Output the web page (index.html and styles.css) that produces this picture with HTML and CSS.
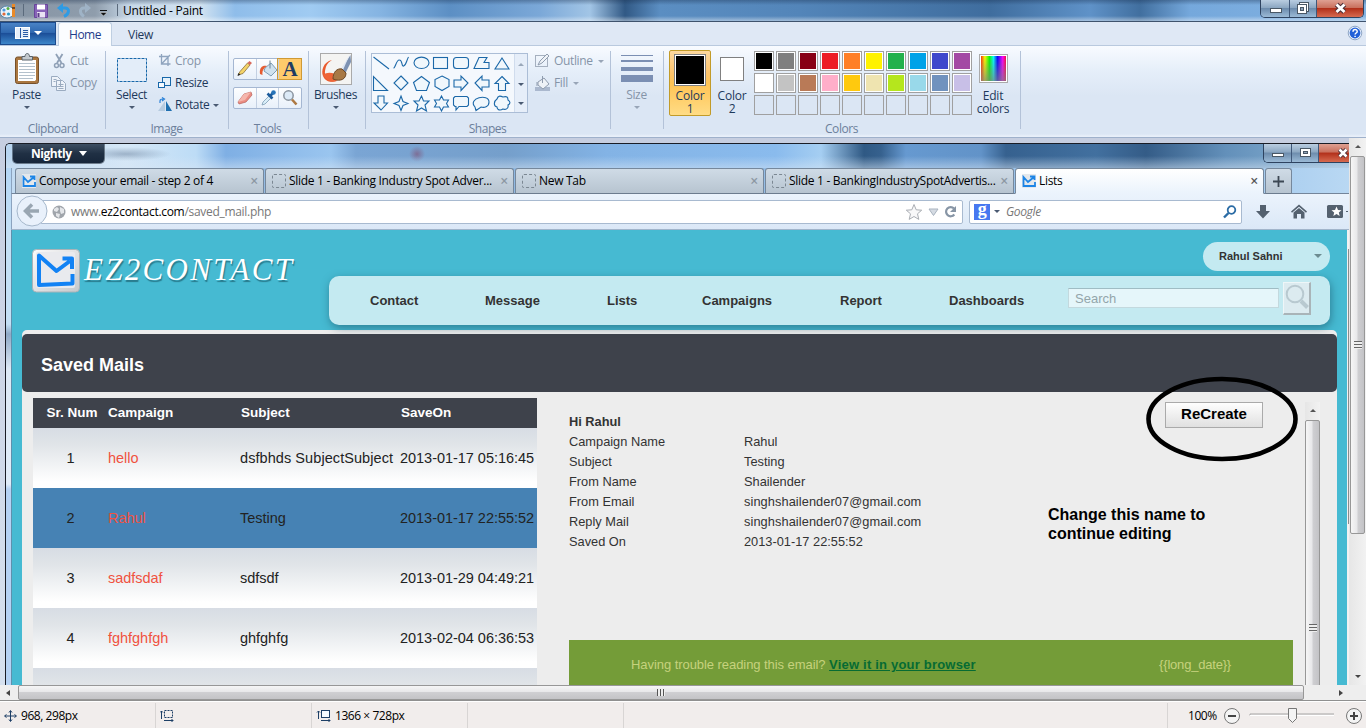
FILE: index.html
```html
<!DOCTYPE html>
<html lang="en">
<head>
<meta charset="utf-8">
<title>Untitled - Paint</title>
<link rel="stylesheet" href="styles.css">
</head>
<body>
<div class="app">
  <header class="titlebar">
    <svg class="quick" width="120" height="21" viewBox="0 0 120 21">
      <ellipse cx="7" cy="12" rx="7" ry="6" fill="#e8f2fa" stroke="#5486ab"/>
      <circle cx="4" cy="10" r="1.6" fill="#4b9be0"/><circle cx="8" cy="8.500" r="1.500" fill="#57b043"/><circle cx="4" cy="14" r="1.600" fill="#e06a3a"/><circle cx="8.500" cy="14" r="1.600" fill="#2f9cc4"/>
      <path d="M13.500 4v13" stroke="#e98a2a" stroke-width="3"/><path d="M12 8h3" stroke="#7b4a1d" stroke-width="2"/>
      <path d="M23.500 4v12M117.500 4v12" stroke="#5b6a7c"/>
      <path d="M34.500 4.500h13v13h-13z" fill="#8863b8" stroke="#68459b"/><path d="M37 4.500h8v5h-8z" fill="#fff"/><path d="M37 12h8v5.500h-8z" fill="#e9e2f4"/><path d="M38.500 13v4" stroke="#5a3d88" stroke-width="2"/>
      <path d="M61 8h4c5 0 4.500 6-1 8.500" fill="none" stroke="#2e9be4" stroke-width="3"/><path d="M57 8l6-5v10z" fill="#2e9be4"/>
      <path d="M87 8h-3c-5 0-4.500 6 0 8.500" fill="none" stroke="#9fb3c6" stroke-width="3"/><path d="M91 8l-6-5v10z" fill="#9fb3c6"/>
      <path d="M100 10.500h7" stroke="#111"/><path d="M100 12.500h7l-3.500 3.500z" fill="#111" stroke="#fff" stroke-width=".4"/>
    </svg>
    <span class="caption">Untitled - Paint</span>
    <div class="winbtns">
      <span class="wb wb-min"><svg width="28" height="17"><rect x="9.500" y="8.500" width="11" height="4" fill="#fff" stroke="#4a5866"/></svg></span>
      <span class="wb wb-max"><svg width="26" height="17"><rect x="9.500" y="2.500" width="9" height="9" fill="#fff" stroke="#4a5866"/><rect x="7.500" y="4.500" width="9" height="9" fill="#fff" stroke="#4a5866"/><rect x="10.500" y="7.500" width="3" height="3" fill="#8fa3b8" stroke="#4a5866"/></svg></span>
      <span class="wb wb-close"><svg width="46" height="17"><path d="M19.500 4.500l8 7.500M27.500 4.500l-8 7.500" stroke="#4d3038" stroke-width="5"/><path d="M19.500 4.500l8 7.500M27.500 4.500l-8 7.500" stroke="#fff" stroke-width="2.800"/></svg></span>
    </div>
  </header>

  <nav class="tabs">
    <span class="filetab"><svg width="56" height="23"><rect x="15.500" y="5.500" width="14" height="11" fill="#e6effa" stroke="#fff"/><path d="M20.500 6v10" stroke="#2b5ba6"/><path d="M23 8.500h5M23 10.500h5M23 12.500h5M23 14.500h5" stroke="#2b5ba6"/><path d="M34 9h8l-4 4z" fill="#fff"/></svg></span>
    <span class="tab tab-on">Home</span>
    <span class="tab">View</span>
    <svg class="help" width="16" height="16"><circle cx="8" cy="8" r="6.800" fill="#eaf2fd" stroke="#8fa6c4"/><circle cx="8" cy="8" r="5.400" fill="#2160d8"/><path d="M6 6.700c0-3 4.300-2.700 4.200-.3C10.200 8 8.100 8 8.100 9.500M8.100 10.800v1.300" fill="none" stroke="#fff" stroke-width="1.500"/></svg>
  </nav>

  <section class="ribbon">
    <div class="group g-clip">
      <div class="tools">
        <div class="big">
          <svg width="26" height="32"><rect x="1.500" y="4" width="23" height="26.500" rx="2" fill="#aa7740" stroke="#76502a"/><path d="M4 7h18v19.500l-1 1.500H4z" fill="#fff"/><path d="M5 10.500h16M5 13.500h16M5 16.500h16M5 19.500h16M5 22.500h16M5 25.500h14" stroke="#b4c1cc"/><path d="M8 3.500h3c0-4 4.500-4 4.500 0h3v3.500H8z" fill="#c3c9ce" stroke="#59636b"/></svg>
          <span>Paste</span><i class="dn"></i>
        </div>
        <div class="small off">
          <span><svg width="17" height="16"><path d="M3 1l5.500 9M9.500 1L4 10" fill="none" stroke="#8fa0b6" stroke-width="1.800"/><circle cx="3.500" cy="12.500" r="2" fill="none" stroke="#8fa0b6" stroke-width="1.500"/><circle cx="9" cy="12.500" r="2" fill="none" stroke="#8fa0b6" stroke-width="1.500"/></svg>Cut</span>
          <span class="pull"><svg width="19" height="17"><path d="M.5 1.500h6l3 3v7h-9zM5.500 5.500h6l3 3v7h-9z" fill="#eef3fa" stroke="#9aabc0"/><path d="M2.500 4.500h3M2.500 6.500h2M7.500 9.500h5M7.500 11.500h5M7.500 13.500h5" stroke="#9aabc0"/></svg>Copy</span>
        </div>
      </div>
      <div class="glabel">Clipboard</div>
    </div>
    <div class="group g-image">
      <div class="tools">
        <div class="big">
          <svg width="32" height="32"><rect x="1.500" y="5.500" width="29" height="23" fill="#e3edf9" stroke="#1767a9" stroke-dasharray="3 1"/></svg>
          <span>Select</span><i class="dn"></i>
        </div>
        <div class="small">
          <span class="off"><svg width="17" height="16"><path d="M3.500 1v10h9M1 3.500h9v9.500M3.500 11l8.500-9" fill="none" stroke="#8fa4be" stroke-width="1.300"/></svg>Crop</span>
          <span><svg width="17" height="16"><rect x="4.500" y="2.500" width="8" height="8" fill="#e4f1fa" stroke="#1767a9"/><rect x=".5" y="7.500" width="6" height="5" fill="#f6fbff" stroke="#1767a9"/></svg>Resize</span>
          <span><svg width="17" height="16"><path d="M8 4v10h6z" fill="#1e6fb0"/><path d="M7 4v10H0z" fill="#b6cbe0"/><path d="M2 6V4q0-2 3-2M4 .5L6.500 2 4 4" fill="none" stroke="#2b82d8" stroke-width="1.200"/></svg>Rotate<i class="dn"></i></span>
        </div>
      </div>
      <div class="glabel">Image</div>
    </div>
    <div class="group g-tools">
      <div class="tools toolgrid">
        <div class="trio">
          <svg width="22" height="22"><path d="M4 16l2-3.500L13.500 4l2.500 2-7 8.500z" fill="#f3d368" stroke="#8a7038" stroke-width=".8"/><path d="M13.500 4l2-2 2.500 2-2 2z" fill="#d86a5c"/><path d="M3.500 17l1-3 2 1.700z" fill="#222"/></svg>
          <svg width="22" height="22"><path d="M8 9l6-5 6 7-6 6-7-5z" fill="#cfe1ef" stroke="#7f9db5"/><path d="M13 1.500v8" stroke="#6c8496"/><path d="M3 15c-1-7 3-9 7-8-3 2-5 4-4.500 9z" fill="#e65c31"/></svg>
          <b class="letter">A</b>
        </div>
        <div class="trio">
          <svg width="22" height="22"><path d="M4 14l6-8 7-2 1 3-6 7-7 2z" fill="#eb8d83" stroke="#b76059" stroke-width=".7"/><path d="M4 14l6-8 7-2-6 8z" fill="#f5b6ac"/></svg>
          <svg width="22" height="22"><path d="M5 17l1-3 6-6 2 2-6 6z" fill="#d8edf8" stroke="#7f9db5" stroke-width=".8"/><path d="M10.500 5.500l5 5M13 8l3-3" stroke="#1c5b9c" stroke-width="2.600"/><circle cx="16.500" cy="4.500" r="2.300" fill="#2774ba"/></svg>
          <svg width="22" height="22"><circle cx="9.500" cy="7.500" r="4.700" fill="#dceaf7" stroke="#8a949f" stroke-width="1.500"/><path d="M13 11.500l4.500 5" stroke="#ad7943" stroke-width="2.600"/></svg>
        </div>
      </div>
      <div class="glabel">Tools</div>
    </div>
    <div class="group g-brush">
      <div class="tools">
        <div class="big">
          <svg width="32" height="32"><rect x=".5" y=".5" width="31" height="31" fill="#f4f4f2" stroke="#aaa"/><path d="M12 7C3 9 1 18 3 23s7 7 14 5c-8-1-13-5-12-10s2-8 7-11z" fill="#ea5b2d"/><path d="M3 22q5-4 12-1l3 6q-8 5-15-5z" fill="#ee6537"/><path d="M30.500 2l-9 14 4 4 5.500-11z" fill="#7d92b2"/><path d="M30 1l-9 15 2 1z" fill="#dfe8f4"/><path d="M13 26c0-7 4-11 9-10l4 4c0 6-5 9-13 6z" fill="#a87945" stroke="#6e4a28"/></svg>
          <span>Brushes</span><i class="dn"></i>
        </div>
      </div>
    </div>
    <div class="group g-shapes">
      <div class="tools">
        <div class="gallery">
          <svg width="142" height="58" fill="#f0f7fc" stroke="#1b68a8" stroke-width="1.100">
            <path d="M2.500 3L18 15"/><path d="M22.500 14c2 0 3-9 6-8 3 0 2 7 4 6 3-1 3-6 5-9" fill="none"/><ellipse cx="50.500" cy="8.800" rx="7.500" ry="5.700"/><rect x="62.500" y="3.500" width="14" height="11"/><rect x="82.500" y="3.500" width="15" height="11" rx="3"/><path d="M103 14.500l5-11h8l-3 5h5v6z"/><path d="M131 4l7 11h-14z"/>
            <path d="M2.500 22.500v14h14z"/><path d="M30 22l7 7-7 7-7-7z"/><path d="M50.500 22.500l8 6-3 8h-10l-3-8z"/><path d="M71 22l7 3.500v7L71 36.500l-7-4v-7z"/><path d="M83 26h7v-4l7 7-7 7.500V33h-7z"/><path d="M118 26h-7v-4l-7 7 7 7.500V33h7z"/><path d="M131 22.500l7 7h-3.500v7h-7v-7H124z"/>
            <path d="M7 42h6v7h3.500L10 56l-7-7h4z"/><path d="M30 42l2 5.500 5 2-5 2-2 5-2-5-5-2 5-2z"/><path d="M50.500 42l2 5h5.500l-4 4 1.500 6-5-3-5 3 1.500-6-4-4h5z"/><path d="M70.500 42l2 4h5l-2 3.500 2 3.500h-5l-2 4-2-4h-5l2-3.500-2-3.500h5z"/><path d="M84 42.500h12l1.500 1.500v7L96 52.500H88l-3 3.500v-3.500h-1l-1.500-1.500v-7z"/><path d="M104 53c-8-9 14-14 14-5 0 5-5 6-8 5l-5 3.500z"/><path d="M126 45c1-4 4-3 6-2 4-1 5 0 5 3 3 2 2 4 0 5 1 4-3 5-5 4-3 2-6 1-6-2-4-1-3-6 0-8z"/>
          </svg>
          <div class="gscroll"><i class="up"></i><i class="dn"></i><i class="dn more"></i></div>
        </div>
        <div class="small off">
          <span><svg width="20" height="16"><rect x="1.500" y="2.500" width="12" height="11" fill="none" stroke="#a5b0bf"/><path d="M4 12l2-4 7-7 2 2-7 7z" fill="#eef2f7" stroke="#8f9cae"/></svg>Outline<i class="dn"></i></span>
          <span><svg width="20" height="17"><path d="M1 12h15v4H1z" fill="#aab8ce"/><path d="M4 7l6-4 5 6-6 5-5-4z" fill="#eef2f7" stroke="#8f9cae"/><path d="M8.500 1v7M3 11V7" stroke="#8f9cae"/></svg>Fill<i class="dn"></i></span>
        </div>
      </div>
      <div class="glabel">Shapes</div>
    </div>
    <div class="group g-size">
      <div class="tools">
        <div class="big off">
          <svg width="32" height="32" fill="#7b8fb3"><path d="M0 2h32v1H0zM0 7h32v2H0zM0 14h32v4H0zM0 22h32v7H0z"/></svg>
          <span>Size</span><i class="dn"></i>
        </div>
      </div>
    </div>
    <div class="group g-colors">
      <div class="tools">
        <div class="colorbtn chosen"><i class="well black"></i><span>Color</span><span>1</span></div>
        <div class="colorbtn"><i class="well white"></i><span>Color</span><span>2</span></div>
        <div class="palette">
          <i style="background:#000"></i><i style="background:#7f7f7f"></i><i style="background:#880015"></i><i style="background:#ed1c24"></i><i style="background:#ff7f27"></i><i style="background:#fff200"></i><i style="background:#22b14c"></i><i style="background:#00a2e8"></i><i style="background:#3f48cc"></i><i style="background:#a349a4"></i>
          <i style="background:#fff"></i><i style="background:#c3c3c3"></i><i style="background:#b97a57"></i><i style="background:#ffaec9"></i><i style="background:#ffc90e"></i><i style="background:#efe4b0"></i><i style="background:#b5e61d"></i><i style="background:#99d9ea"></i><i style="background:#7092be"></i><i style="background:#c8bfe7"></i>
          <i class="e"></i><i class="e"></i><i class="e"></i><i class="e"></i><i class="e"></i><i class="e"></i><i class="e"></i><i class="e"></i><i class="e"></i><i class="e"></i>
        </div>
        <div class="colorbtn edit"><i class="well rainbow"></i><span>Edit</span><span>colors</span></div>
      </div>
      <div class="glabel">Colors</div>
    </div>
  </section>

  <main class="work">
    <div class="canvas">
      <div class="ff">
        <div class="fftitle">
          <span class="nightly">Nightly<i></i></span>
          <div class="ffbtns">
            <span class="wb wb-min"><svg width="27" height="18"><rect x="8.500" y="9.500" width="11" height="3" fill="#fff" stroke="#4a5866"/></svg></span>
            <span class="wb wb-max"><svg width="26" height="18"><rect x="8.500" y="4.500" width="10" height="8" fill="#fff" stroke="#4a5866"/><rect x="11.500" y="7.500" width="4" height="2" fill="#8fa3b8" stroke="#4a5866"/></svg></span>
            <span class="wb wb-close"><svg width="30" height="18"><path d="M20.500 5.500l7 7M27.500 5.500l-7 7" stroke="#4d3038" stroke-width="4.500"/><path d="M20.500 5.500l7 7M27.500 5.500l-7 7" stroke="#fff" stroke-width="2.500"/></svg></span>
          </div>
        </div>
        <div class="fftabs">
          <div class="fft"><svg class="fav" width="14" height="14"><rect width="14" height="14" fill="#e4e8ec"/><path d="M13 8v4H1.500V3L6 8l6-5M8 2.500h4.500V6" fill="none" stroke="#1d85e6" stroke-width="1.800"/></svg><span>Compose your email - step 2 of 4</span><b>×</b></div>
          <div class="fft"><i class="blank"></i><span>Slide 1 - Banking Industry Spot Adver...</span><b>×</b></div>
          <div class="fft"><i class="blank"></i><span>New Tab</span><b>×</b></div>
          <div class="fft"><i class="blank"></i><span>Slide 1 - BankingIndustrySpotAdvertis...</span><b>×</b></div>
          <div class="fft on"><svg class="fav" width="14" height="14"><rect width="14" height="14" fill="#e4e8ec"/><path d="M13 8v4H1.500V3L6 8l6-5M8 2.500h4.500V6" fill="none" stroke="#1d85e6" stroke-width="1.800"/></svg><span>Lists</span><b>×</b></div>
          <div class="fft plus"><svg width="11" height="11"><path d="M5.500 0v11M0 5.500h11" stroke="#3d4854" stroke-width="1.800"/></svg></div>
        </div>
        <div class="ffbar">
          <svg class="back" width="32" height="32"><circle cx="16" cy="16" r="15" fill="#e9f1fb" stroke="#a5b7cb"/><path d="M23 16H10M16 9.500L9.500 16l6.500 6.500" fill="none" stroke="#99a6b2" stroke-width="3.500"/></svg>
          <div class="url">
            <svg width="14" height="14"><circle cx="7" cy="7" r="6.500" fill="#a0a5ab"/><path d="M2 4l3-2 2 2-2 3-3-1zM8 2l4 2v4l-3 1-1-3zM4 8l4 1-1 4-3-2z" fill="#e4e6e9"/></svg>
            <span>www.<b>ez2contact.com</b>/saved_mail.php</span>
            <svg class="urlend" width="52" height="18"><path d="M9 1.500l2.200 5.300 5.500.4-4.200 3.600 1.300 5.600L9 13.500l-4.800 2.900 1.300-5.600-4.200-3.600 5.500-.4z" fill="#f8f8f9" stroke="#a9adb3"/><path d="M24 6h9l-4.500 6.500z" fill="#d5dbe3" stroke="#a9b3bf"/><path d="M49 5.500a4.600 4.600 0 1 0 .3 6" fill="none" stroke="#8795a5" stroke-width="2.200"/><path d="M51 3v6h-6z" fill="#8795a5"/></svg>
          </div>
          <div class="find">
            <b class="g">g</b><i class="dn"></i><em>Google</em>
            <svg width="14" height="14"><circle cx="8.500" cy="5" r="3.800" fill="none" stroke="#2b6ca5" stroke-width="1.800"/><path d="M5.500 8L1 12.500" stroke="#2b6ca5" stroke-width="2.400"/></svg>
          </div>
          <svg class="barend" width="94" height="18" fill="#54616f"><path d="M6 2h6v6h4l-7 7.500L2 8h4z"/><path d="M45 1.500l8 7-1 1.200-7-5.900-7 5.900-1-1.200z"/><path d="M39.500 9.500l5.500-4.600 5.500 4.600V15.500H47V11h-4v4.500h-3.500z"/><rect x="73" y="2" width="16" height="13" rx="1.500"/><path d="M82.500 3.500l1.500 3.500 3.500.2-2.700 2.300.9 3.600-3.200-2-3.200 2 .9-3.600L77.500 7.200 81 7z" fill="#fff"/><path d="M92 8h2v1h-2z"/></svg>
        </div>
        <div class="site">
          <div class="page">
            <div class="sitehead">
              <div class="logo">
                <svg width="48" height="44"><defs><linearGradient id="lg" x2="1" y2="1"><stop stop-color="#fbfbfb"/><stop offset="1" stop-color="#c6c8cb"/></linearGradient></defs><rect x=".5" y=".5" width="47" height="42.500" rx="4" fill="url(#lg)" stroke="#a9b3b8"/><rect x="4" y="3" width="39" height="36" rx="2" fill="#e9eaee"/><path d="M40.500 25v9.500L7 36V6.500L24.500 22 38 12M30.500 9.500H40V20" fill="none" stroke="#1282f4" stroke-width="4" stroke-linejoin="round"/></svg>
                <span>EZ2CONTACT</span>
              </div>
              <div class="headright">
                <div class="user"><span>Rahul Sahni</span><i class="dn"></i></div>
                <div class="menu">
                  <span>Contact</span><span>Message</span><span>Lists</span><span>Campaigns</span><span>Report</span><span>Dashboards</span>
                  <div class="sinput">Search</div>
                  <div class="sbtn"><svg width="26" height="30"><circle cx="11" cy="11" r="8.300" fill="none" stroke="#b8c9d0" stroke-width="2"/><path d="M17 18l6.500 6.500" stroke="#b8c9d0" stroke-width="4"/></svg></div>
                </div>
              </div>
            </div>
            <div class="panel">
              <h1>Saved Mails</h1>
              <div class="cols">
                <div class="grid">
                  <div class="row head"><span>Sr. Num</span><span>Campaign</span><span>Subject</span><span>SaveOn</span></div>
                  <div class="row"><span>1</span><a>hello</a><span class="long">dsfbhds SubjectSubject</span><span>2013-01-17 05:16:45</span></div>
                  <div class="row sel"><span>2</span><a>Rahul</a><span>Testing</span><span>2013-01-17 22:55:52</span></div>
                  <div class="row"><span>3</span><a>sadfsdaf</a><span>sdfsdf</span><span>2013-01-29 04:49:21</span></div>
                  <div class="row"><span>4</span><a>fghfghfgh</a><span>ghfghfg</span><span>2013-02-04 06:36:53</span></div>
                  <div class="row"></div>
                </div>
                <div class="mail">
                  <div class="mailtop">
                    <dl>
                      <dt><b>Hi Rahul</b></dt><dd></dd>
                      <dt>Campaign Name</dt><dd>Rahul</dd>
                      <dt>Subject</dt><dd>Testing</dd>
                      <dt>From Name</dt><dd>Shailender</dd>
                      <dt>From Email</dt><dd class="addr">singhshailender07@gmail.com</dd>
                      <dt>Reply Mail</dt><dd class="addr">singhshailender07@gmail.com</dd>
                      <dt>Saved On</dt><dd>2013-01-17 22:55:52</dd>
                    </dl>
                    <div class="side">
                      <div class="recreate">ReCreate</div>
                      <p>Change this name to<br>continue editing</p>
                    </div>
                  </div>
                  <div class="green"><span>Having trouble reading this email? <u>View it in your browser</u></span><span>{{long_date}}</span></div>
                </div>
                <div class="vbar inner"><i class="up"></i><div class="thumb"><i class="grip"></i></div></div>
              </div>
            </div>
            <svg class="mark" width="154" height="88"><ellipse cx="77" cy="44" rx="73.500" ry="40" fill="none" stroke="#000" stroke-width="4.600"/></svg>
          </div>
          <div class="edge"><i></i></div>
        </div>
      </div>
    </div>
    <div class="vbar outer"><i class="up"></i><div class="thumb"><i class="grip"></i></div><i class="dn"></i></div>
    <div class="hbar"><i class="lt"></i><div class="thumb"><i class="grip"></i></div><i class="rt"></i></div>
    <div class="corner"></div>
  </main>

  <footer class="status">
    <span class="cell"><svg width="13" height="12"><path d="M6.500 1v10M1 6h11M5 2.500l1.500-2 1.500 2M5 9.500l1.500 2 1.500-2M2.500 4.500L.5 6l2 1.500M10.500 4.500l2 1.500-2 1.500" fill="none" stroke="#1d3f66"/></svg>968, 298px</span>
    <span class="cell"><svg width="14" height="12"><path d="M1.500 1v8M0 2.500L1.500 1 3 2.500M4 10.500h9M11.500 9l1.500 1.500-1.500 1.500" fill="none" stroke="#1d3f66"/><rect x="4.500" y=".5" width="8" height="7" fill="none" stroke="#1d3f66" stroke-dasharray="2 1"/></svg></span>
    <span class="cell"><svg width="15" height="12"><path d="M2.500 1v8M1 2.500L2.500 1 4 2.500M5 10.500h9M12.500 9l1.500 1.500-1.500 1.500" fill="none" stroke="#1d3f66"/><rect x="5.500" y=".5" width="8" height="7" fill="#f6fbff" stroke="#1d3f66"/></svg>1366 × 728px</span>
    <span class="cell"></span>
    <span class="cell wide"></span>
    <span class="zoom">100%
      <svg width="144" height="20"><g fill="#f4f4f4" stroke="#777"><circle cx="10" cy="10" r="7.500"/><circle cx="132" cy="10" r="7.500"/></g><path d="M6 10h8M128 10h8M132 6v8" stroke="#444" stroke-width="2"/><path d="M28 9.500V8h84" fill="none" stroke="#a5a5a5"/><path d="M28 9.500h84" stroke="#fff"/><path d="M66.500 2.500h8v10l-4 4-4-4z" fill="#f4f4f4" stroke="#777"/></svg>
    </span>
  </footer>
</div>
</body>
</html>
```
FILE: styles.css
```css
* { box-sizing: border-box; }
body { margin: 0; overflow: hidden; font: 12px/14px "Open Sans", "Noto Sans", sans-serif; letter-spacing: -.35px; color: #1e395b; }
svg { display: block; flex: none; }
.app { width: 1366px; height: 728px; display: flex; flex-direction: column; background: #c8d1e3; white-space: nowrap; }
i { display: block; flex: none; }
.dn, .up { width: 0; height: 0; border: 3px solid transparent; }
.dn { border-top-color: #4a5a72; border-bottom: 0; }
.up { border-bottom-color: #9aa8ba; border-top: 0; }

/* window title */
.titlebar { height: 22px; display: flex; border-bottom: 1px solid #3f536d; color: #000;
  background: linear-gradient(180deg, rgba(20,40,70,.35), transparent 5px 16px, rgba(255,255,255,.45)),
  linear-gradient(90deg, #8593a3 0, #8f9dac 95px, #c7d8e8 130px, #d2e3f1 200px, #8fbdea 235px, #a0cbf2 310px, #85b4e2 380px, #5c8fc4 450px, #7ba8d8 540px, #a2c5e6 590px, #315985 625px, #5b8ec2 660px, #5385b9 800px, #3f6d9e 990px, #5f92c8 1090px, #416f9f 1140px, #75a8dc 1190px, #85b4e2 1366px); }
.caption { margin-left: 3px; line-height: 22px; letter-spacing: -.22px; }
.winbtns { margin-left: auto; margin-right: 2px; height: 18px; display: flex; border: 1px solid #2e4360; border-top: 0; border-radius: 0 0 5px 5px; overflow: hidden; }
.wb { border-right: 1px solid #40587a; background: linear-gradient(#b9cde1, #8ca7c2 45%, #6d8cad 50%, #9bbad6); }
.wb-close { border: 0; background: linear-gradient(#dfa092, #c9705d 45%, #b2301a 50%, #d66a50); }

/* ribbon tabs */
.tabs { height: 24px; display: flex; background: #dfe8f5; border-bottom: 1px solid #b9c9de; }
.filetab { width: 56px; height: 23px; border: 1px solid #1b4a8d; background: linear-gradient(#4a83c6, #2f68b0 45%, #1c4f99 50%, #3c86c9); }
.filetab svg { margin: -1px; }
.tab { width: 53px; line-height: 26px; text-align: center; margin-left: 2px; }
.tab-on { width: 54px; background: #fbfdff; border: 1px solid #bfcfe2; border-bottom: 0; border-radius: 3px 3px 0 0; height: 24px; line-height: 24px; color: #1e3c8a; letter-spacing: -.5px; }
.help { margin: 3px 3px 0 auto; }

/* ribbon */
.ribbon { height: 92px; display: flex; background: linear-gradient(#f8fbff, #e5eef9 25px, #dbe6f4 50px, #dbe6f4 88px, #e8eff9 90px); border-bottom: 1px solid #9fb1cb; }
.group { display: flex; flex-direction: column; height: 88px; margin-top: 2px; background: linear-gradient(#b3c2d8, #b3c2d8) right 3px / 1px 78px no-repeat; }
.tools { display: flex; height: 73px; flex: none; }
.glabel { color: #6c7f9b; text-align: center; line-height: 15px; letter-spacing: -.45px; }
.g-clip { width: 106px; }
.g-image { width: 123px; }
.g-image .glabel { padding-right: 2px; }
.g-tools { width: 80px; }
.g-tools .glabel { padding-right: 3px; }
.g-brush { width: 57px; }
.g-shapes { width: 245px; }
.g-shapes .glabel, .g-colors .glabel { padding-right: 2px; }
.g-size { width: 53px; }
.g-size .big { padding-right: 2px; }
.g-colors { width: 357px; }
.big { width: 53px; display: flex; flex-direction: column; align-items: center; padding-top: 5px; }
.big span { line-height: 16px; margin-top: 2px; margin-bottom: 3px; }
.g-image .big { width: 52px; padding-right: 1px; }
.g-brush .big { width: 53px; }
.small { display: flex; flex-direction: column; padding-top: 2px; }
.small > span { display: flex; align-items: center; height: 22px; flex: none; }
.small .dn { margin-left: 5px; }
.g-image .small .dn { margin-left: 3px; }
.pull { margin-left: -2px; }
.off { color: #8594a8; }
.off .dn { border-top-color: #98a5b7; }
.toolgrid { flex-direction: column; gap: 7px; padding: 10px 0 0 4px; }
.trio { width: 69px; height: 22px; display: flex; border: 1px solid #a5b7d2; border-radius: 2px; background: linear-gradient(#fdfeff, #e8f0fa); }
.trio > * + * { border-left: 1px solid #c3d0e2; }
.trio svg { height: 20px; }
.letter { flex: 1; background: #ffcb6b; outline: 1px solid #cf9a35; font: bold 21px/20px "Liberation Serif", serif; text-align: center; color: #1f3c63; }
.gallery { margin: 5px 6px 0 5px; width: 157px; height: 60px; border: 1px solid #abbdd6; display: flex; background: #f4f8fd; }
.gallery svg { margin-left: -1px; margin-right: 1px; }
.gscroll { width: 13px; height: 58px; display: flex; flex-direction: column; align-items: center; justify-content: space-between; padding: 9px 0 7px; background: #e6eef9; border-left: 1px solid #d0dced; }
.gscroll .more { box-shadow: 0 -5px 0 -2px #4a5a72; }
.colorbtn { width: 42px; height: 66px; display: flex; flex-direction: column; align-items: center; text-align: center; line-height: 13px; border: 1px solid transparent; }
.g-colors .tools { padding: 2px 0 0 5px; }
.chosen { border-color: #c29b29; border-radius: 2px; background: linear-gradient(#fdd9a0, #fdc36c 35%, #ffc354 50%, #ffdc85); }
.colorbtn span { letter-spacing: -.2px; height: 13px; }
.well { border: 1px solid #808080; box-shadow: inset 0 0 0 1px #fff; }
.black { width: 32px; height: 32px; margin: 3px 0; background: #000; }
.white { width: 24px; height: 24px; margin: 6px 0 8px; background: #fff; }
.palette { display: grid; grid-template-columns: repeat(10, 20px); grid-auto-rows: 20px; gap: 2px; margin: 1px 0 0 1px; }
.palette i { border: 1px solid #a0a0a0; box-shadow: inset 0 0 0 1px #fff; }
.palette .e { box-shadow: none; }
.rainbow { width: 29px; height: 29px; margin: 3px 0 6px; border-color: #aaa; background: linear-gradient(180deg, transparent, rgba(128,128,128,.75)), linear-gradient(90deg, red, yellow 18%, lime 35%, cyan 50%, blue 65%, magenta 84%, red); }

/* work area */
.work { height: 563px; display: grid; grid-template: 547px 16px / 1349px 17px; }
.canvas { overflow: hidden; padding: 5px 0 0 5px; background: linear-gradient(#c6cee0, #d6e1ef 547px); }
.corner { background: #eee; border-bottom: 1px solid #909090; }
.ff { width: 1344px; height: 542px; border: 1px solid #1a1d26; border-width: 1px 0 0 1px; border-radius: 5px 0 0; padding-left: 5px; overflow: hidden;
  background: linear-gradient(#aed2f5 0, #c4e0f5 90px, #c4e0f5 180px, #8ea9c6 190px, #dde9f5 225px, #e0ecf8 340px, #b5d2f4 345px); }
.fftitle { height: 24px; margin-left: -5px; padding-left: 7px; display: flex; justify-content: space-between; align-items: flex-start;
  background: linear-gradient(transparent 12px, rgba(215,230,245,.5)), radial-gradient(ellipse 45px 7px at 120px 10px, rgba(90,115,145,.45), transparent), radial-gradient(circle 8px at 411px 10px, rgba(130,60,95,.5), transparent),
  linear-gradient(90deg, #b7d4ef 0, #d5e7f7 120px, #bddcf6 190px, #7fafe4 220px, #9ac5ef 325px, #7aa5d4 350px, #759fcb 500px, #83b3e5 600px, #8abbed 770px, #a5cef2 815px, #2f5984 858px, #36618e 875px, #6699d0 900px, #6293c8 975px, #36618f 1000px, #42709f 1090px, #345c87 1140px, #6390ba 1220px, #91b9d9 1344px); }
.nightly { width: 91px; height: 19px; border-radius: 0 0 4px 4px; background: linear-gradient(#3e4f63, #203044 50%, #17263a); color: #fff; font-weight: 700; letter-spacing: -.45px; line-height: 18px; padding-left: 18px; display: flex; align-items: center; gap: 7px; box-shadow: 0 0 0 1px rgba(15,25,40,.5); }
.nightly i { border: 4px solid transparent; border-top: 5px solid #fff; border-bottom: 0; }
.ffbtns { height: 19px; display: flex; border: 1px solid #2e4360; border-width: 0 0 1px 1px; border-radius: 0 0 0 5px; overflow: hidden; }
.fftabs { height: 26px; padding-left: 3px; display: flex; gap: 1px; background: linear-gradient(90deg, #c3dcf3, #8cb5e0 300px, #9ec6ec 1200px, #b9d8f3); border-bottom: 1px solid #74859a; border-left: 1px solid #8ba3bf; }
.fft { width: 249px; height: 26px; display: flex; align-items: center; padding: 0 5px 0 6px; border: 1px solid #76889c; border-bottom: 1px solid #6c7c8e; border-radius: 3px 3px 0 0; background: linear-gradient(#cfdbe6, #b7c4d0); color: #000; }
.fft span { margin-left: 3px; letter-spacing: -.3px; }
.fft b { margin-left: auto; font-weight: 600; color: #8c97a2; font-size: 14px; }
.fft.on { background: linear-gradient(#fff, #ebf3fc); border-bottom-color: #ebf3fc; }
.fft.on b { color: #555; }
.fft.plus { width: 27px; padding: 0; justify-content: center; }
.blank { width: 14px; height: 14px; border: 1px dashed #7b8792; border-radius: 2px; }
.ffbar { height: 36px; display: flex; align-items: center; padding-left: 4px; background: linear-gradient(#ebf3fc, #dbe8f7); border-bottom: 1px solid #a2b5cb; border-left: 1px solid #8ba3bf; }
.back { z-index: 1; margin-top: -1px; }
.url, .find { height: 24px; background: #fff; border: 1px solid #a8bad0; border-radius: 2px; display: flex; align-items: center; }
.url { width: 923px; margin-left: -8px; padding-left: 11px; color: #777; letter-spacing: -.3px; }
.url span { margin-left: 5px; }
.url b { font-weight: 400; color: #000; }
.urlend { margin: 0 5px 0 auto; }
.find { width: 273px; margin-left: 6px; padding: 0 4px 0 4px; color: #777; }
.find .g { width: 16px; height: 16px; background: #4778f0; color: #fff; font: bold 18px/11px "Liberation Serif", serif; text-align: center; margin-right: 4px; }
.find em { margin-left: 6px; font-size: 12px; }
.find svg { margin-left: auto; }
.barend { margin-left: 12px; }

/* site */
.site { height: 456px; display: flex; border-left: 1px solid #5f90ac; }
.page { position: relative; width: 1335px; height: 456px; background: #46bad2; font-family: "Liberation Sans", Arial, sans-serif; letter-spacing: 0; color: #333; }
.sitehead { display: flex; height: 100px; justify-content: space-between; padding: 12px 17px 0 20px; }
.logo { display: flex; padding-top: 7px; gap: 4px; }
.logo span { font: italic 31px/42px "Liberation Serif", serif; color: #fff; text-shadow: 1px 2px 1px rgba(20,80,95,.6); letter-spacing: 2.300px; }
.headright { width: 1001px; display: flex; flex-direction: column; align-items: flex-end; gap: 5px; margin-left: -20px; }
.user { width: 127px; height: 29px; border-radius: 15px; background: #c4eaf1; display: flex; align-items: center; justify-content: space-between; padding: 0 8px 1px 16px; font-size: 11px; font-weight: bold; }
.user .dn { border-top-color: #6d8c91; border-width: 4px 4px 0; }
.menu { width: 1001px; height: 49px; border-radius: 10px; background: #c4eaf1; box-shadow: 1px 3px 8px rgba(20,70,90,.5); display: grid; grid-template-columns: 115px 122px 95px 138px 109px 119px 211px 28px; padding-left: 41px; align-items: center; font-size: 13px; font-weight: bold; z-index: 1; }
.sinput { height: 20px; margin-top: -5px; background: #e5f6fa; border: 1px solid #c3d9de; border-top: 1px solid #9fbcc4; font-weight: 400; color: #93a5aa; line-height: 19px; padding-left: 6px; letter-spacing: 0; }
.sbtn { width: 28px; height: 33px; margin: -4px 0 0 4px; background: #dcebf0; border: 1px solid #eef6f8; border-right: 2px solid #a9b4b8; border-bottom: 2px solid #a9b4b8; }
.panel { height: 356px; margin: 0 10px; background: #ededed; border-radius: 5px 5px 0 0; padding-top: 4px; }
h1 { margin: 0; height: 58px; border-radius: 5px; background: #3e424b; color: #fff; font-size: 18px; line-height: 62px; padding-left: 19px; }
.cols { display: flex; height: 294px; overflow: hidden; padding: 6px 0 0 11px; }
.grid { width: 504px; }
.row { height: 60px; display: grid; grid-template-columns: 75px 132px 160px 137px; align-items: center; background: linear-gradient(#d7dce4, #e0e4e8 16px, #fff 54px); color: #222; font-size: 14.500px; letter-spacing: -.03px; }
.row > :first-child { text-align: center; }
.long { letter-spacing: .07px; }
.row a { color: #f0523f; }
.row.sel { background: #4682b4; }
.row.head { height: 30px; background: #3e424b; color: #fff; font-size: 13.500px; font-weight: bold; letter-spacing: 0; }
.row.head span:first-child { padding-left: 3px; }
.row.head span:nth-child(n+3) { padding-left: 1px; }
.mail { width: 724px; margin-left: 32px; }
.mailtop { height: 242px; display: flex; justify-content: space-between; }
dl { margin: 14px 0 0; display: grid; grid-template-columns: 175px auto; grid-auto-rows: 20px; line-height: 20px; font-size: 12.800px; align-content: start; }
dd { margin: 0; }
.addr { letter-spacing: .08px; }
.side { width: 245px; color: #000; font-weight: bold; }
.recreate { width: 98px; height: 26px; margin: 4px 0 0 117px; border: 1px solid #aaa; background: linear-gradient(#fefefe, #e0e0e0); font-size: 15px; line-height: 22px; text-align: center; }
.side p { margin: 77px 0 0; font-size: 16px; line-height: 19px; }
.green { height: 60px; background: #749c38; display: flex; justify-content: space-between; padding: 0 62px; line-height: 49px; font-size: 13px; color: #c6d27d; }
.green span { letter-spacing: -.06px; }
.green span + span { letter-spacing: -.2px; }
.green u { font-weight: bold; color: #066b33; letter-spacing: .2px; }
.mark { position: absolute; left: 1133px; top: 145px; }
.edge { flex: 1; background: #f2f2f2; padding: 19px 0 0 1px; }
.edge i { height: 275px; border-left: 1px solid #8c8c8c; background: #ddd; }

/* scroll bars */
.vbar { background: linear-gradient(90deg, #e6e6e6, #f2f2f2); display: flex; flex-direction: column; align-items: center; }
.vbar .up, .vbar > .dn { border-bottom-color: #555; margin: 7px 0; }
.vbar > .dn { border-bottom: 0; border-top-color: #444; margin: auto 0 7px; }
.vbar .thumb { width: 15px; border: 1px solid #979797; border-radius: 2px; background: linear-gradient(90deg, #f6f6f6, #e7e7e9 48%, #cfcfd2 52%, #c3c3c6); display: flex; align-items: center; justify-content: center; }
.outer .thumb { height: 378px; margin-top: 1px; }
.inner { width: 15px; margin: 4px 0 0 12px; }
.inner .thumb { height: 415px; margin-top: 1px; flex: none; }
.vbar .grip { width: 8px; height: 8px; background: repeating-linear-gradient(#666 0 1px, #eee 1px 3px); }
.hbar { width: 1349px; border-bottom: 1px solid #909090; background: #eee; display: flex; align-items: center; }
.lt, .rt { width: 0; height: 0; border: 3px solid transparent; }
.lt { border-right-color: #444; border-left: 0; border-right-width: 4px; margin: 0 8px 0 6px; }
.rt { border-left-color: #444; border-right: 0; border-left-width: 4px; margin-left: 35px; }
.hbar .thumb { width: 1286px; height: 15px; border: 1px solid #979797; border-radius: 2px; background: linear-gradient(#f6f6f6, #e7e7e9 45%, #cfcfd2 50%, #c3c3c6); display: flex; align-items: center; justify-content: center; }
.hbar .grip { width: 8px; height: 7px; background: repeating-linear-gradient(90deg, #555 0 1px, #eee 1px 3px); }

/* status bar */
.status { height: 27px; display: flex; background: #f1edec; border-top: 1px solid #fff; color: #000; padding-top: 1px; letter-spacing: -.45px; }
.cell { width: 156px; display: flex; align-items: center; gap: 4px; padding-left: 4px; border-right: 1px solid #d8d5d4; }
.wide { width: 544px; }
.zoom { display: flex; align-items: center; gap: 5px; padding-left: 20px; }
```
